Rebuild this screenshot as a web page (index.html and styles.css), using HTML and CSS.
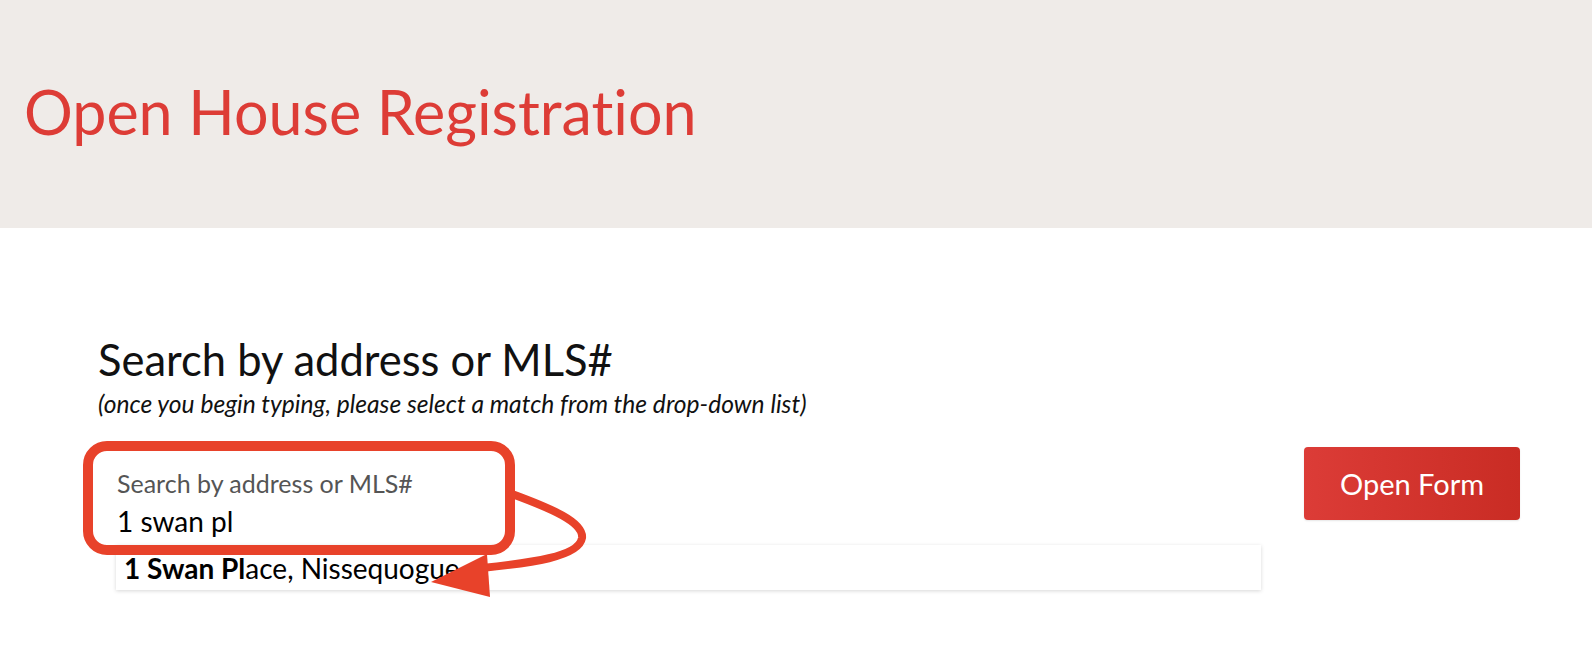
FILE: index.html
```html
<!DOCTYPE html>
<html lang="en">
<head>
<meta charset="utf-8">
<title>Open House Registration</title>
<link rel="stylesheet" href="styles.css">
</head>
<body>
<header class="hero">
  <h1 class="hero-title">Open House Registration</h1>
</header>
<main class="content">
  <h2 class="search-title">Search by address or MLS#</h2>
  <p class="search-hint">(once you begin typing, please select a match from the drop-down list)</p>
  <div class="search-row">
    <div class="field">
      <label class="field-label">Search by address or MLS#</label>
      <div class="field-value">1 swan pl</div>
      <ul class="suggestions">
        <li class="suggestion"><strong>1 Swan Pl</strong>ace, Nissequogue</li>
      </ul>
    </div>
    <button class="open-btn">Open Form</button>
  </div>
</main>
<svg class="annotation" width="1592" height="654" viewBox="0 0 1592 654">
  <rect x="88" y="446" width="422" height="104" rx="19" ry="19" fill="none" stroke="#e8422a" stroke-width="10"/>
  <path d="M512 494 C 550 508, 584 522, 582 538 C 579 557, 530 563, 482 568" fill="none" stroke="#e8422a" stroke-width="8" stroke-linecap="round"/>
  <polygon points="431,582 487,554 490,597" fill="#e8422a"/>
</svg>
</body>
</html>
```

FILE: styles.css
```css
* { box-sizing: border-box; }
html, body { margin: 0; padding: 0; }
body {
  font-family: Lato, "Open Sans", "Liberation Sans", sans-serif;
  font-variant-ligatures: none;
  background: #ffffff;
  color: #000;
  width: 1592px;
  height: 654px;
  overflow: hidden;
  position: relative;
}
.hero {
  height: 228px;
  background: #efebe8;
  display: flex;
  align-items: center;
  padding: 0 0 4px 24px;
}
.hero-title {
  margin: 0;
  font-weight: 400;
  font-size: 61px;
  line-height: 1.2;
  color: #dd3c36;
}
.content {
  padding: 107px 72px 0 98px;
}
.search-title {
  margin: 0;
  font-weight: 400;
  font-size: 43.5px;
  line-height: 48px;
  color: #111;
}
.search-hint {
  margin: 6px 0 0;
  font-style: italic;
  font-size: 24.6px;
  line-height: 29px;
  color: #111;
}
.search-row {
  display: flex;
  align-items: flex-start;
  gap: 42px;
  margin-top: 29px;
}
.field {
  flex: 1;
  position: relative;
  padding: 23px 0 0 19px;
  height: 95px;
}
.field-label {
  display: block;
  font-size: 25px;
  line-height: 26px;
  color: #555;
}
.field-value {
  margin-top: 8px;
  font-size: 28px;
  line-height: 34px;
  color: #000;
}
.suggestions {
  position: absolute;
  left: 18px;
  right: 1px;
  top: 98px;
  margin: 0;
  padding: 0 8px;
  list-style: none;
  height: 45px;
  background: #fff;
  box-shadow: 0 1px 4px rgba(0,0,0,0.16);
  display: flex;
  align-items: center;
}
.suggestion {
  font-size: 28px;
  color: #000;
}
.suggestion strong { font-weight: 700; }
.open-btn {
  width: 216px;
  height: 73px;
  margin-top: 0;
  border: none;
  border-radius: 4px;
  background: linear-gradient(90deg, #dc3c37 0%, #c92c24 100%);
  color: #fff;
  font-family: Lato, "Open Sans", "Liberation Sans", sans-serif;
  font-size: 29px;
  box-shadow: 0 1px 2px rgba(0,0,0,0.1);
}
.annotation {
  position: absolute;
  left: 0;
  top: 0;
  pointer-events: none;
}
```
